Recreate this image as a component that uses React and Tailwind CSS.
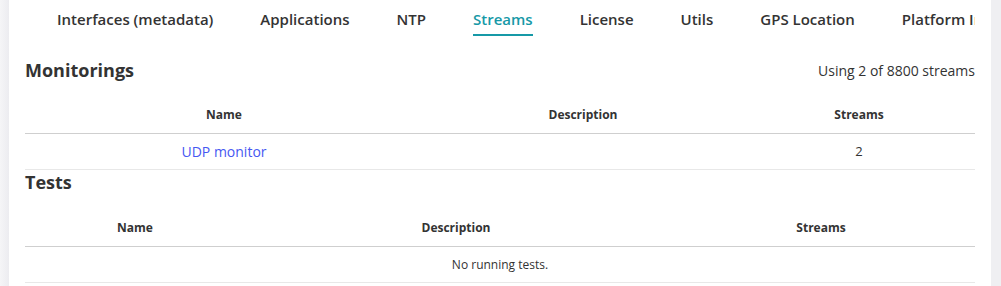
const tabs = [
  'Interfaces (metadata)',
  'Applications',
  'NTP',
  'Streams',
  'License',
  'Utils',
  'GPS Location',
  'Platform Info',
];

const monitorings = [{ name: 'UDP monitor', description: '', streams: 2 }];

function DataTable({ cols, children }) {
  return (
    <div className="w-full">
      <div
        className="grid h-[37px] items-center border-b border-[#cfcfcf] text-[12px] font-bold text-[#333]"
        style={{ gridTemplateColumns: cols }}
      >
        <div className="text-center">Name</div>
        <div className="text-center">Description</div>
        <div className="text-center">Streams</div>
      </div>
      {children}
    </div>
  );
}

export default function App() {
  return (
    <div className="flex h-[286px] w-full bg-white font-['Open_Sans',sans-serif] text-[#333]">
      <div className="w-[9px] shrink-0 bg-gradient-to-r from-[#f5f5f7] to-[#ececf0]" />

      <main className="min-w-0 flex-1 overflow-hidden px-4">
        <nav className="flex overflow-hidden whitespace-nowrap pl-2 pt-[9px]">
          {tabs.map((tab) => {
            const active = tab === 'Streams';
            return (
              <div key={tab} className="mx-[23.5px] flex shrink-0 flex-col first:ml-6">
                <span
                  className={
                    'text-[15px] font-semibold leading-5 ' +
                    (active ? 'text-[#1699a7]' : 'text-[#333]')
                  }
                >
                  {tab}
                </span>
                <span
                  className={'mt-[5px] h-[2px] ' + (active ? 'bg-[#1699a7]' : 'bg-transparent')}
                />
              </div>
            );
          })}
        </nav>

        <div className="mt-[22px] flex h-6 items-center justify-between">
          <h2 className="text-[18px] font-bold leading-6">Monitorings</h2>
          <span className="text-[14px]">Using 2 of 8800 streams</span>
        </div>

        <div className="mt-[15px]">
          <DataTable cols="398px 320px 1fr">
            {monitorings.map((m) => (
              <div
                key={m.name}
                className="grid h-[36px] items-center border-b border-[#e8e8e8] text-[14px]"
                style={{ gridTemplateColumns: '398px 320px 1fr' }}
              >
                <a href="#" className="text-center text-[#4658f2]">
                  {m.name}
                </a>
                <div className="text-center">{m.description}</div>
                <div className="text-center text-[13px]">{m.streams}</div>
              </div>
            ))}
          </DataTable>
        </div>

        <h2 className="h-6 text-[18px] font-bold leading-6">Tests</h2>

        <div className="mt-4">
          <DataTable cols="220px 422px 1fr">
            <div className="flex h-[36px] items-center justify-center border-b border-[#e8e8e8] text-[12px]">
              No running tests.
            </div>
          </DataTable>
        </div>
      </main>

      <div className="w-[10px] shrink-0 bg-[#efeff2]" />
    </div>
  );
}
